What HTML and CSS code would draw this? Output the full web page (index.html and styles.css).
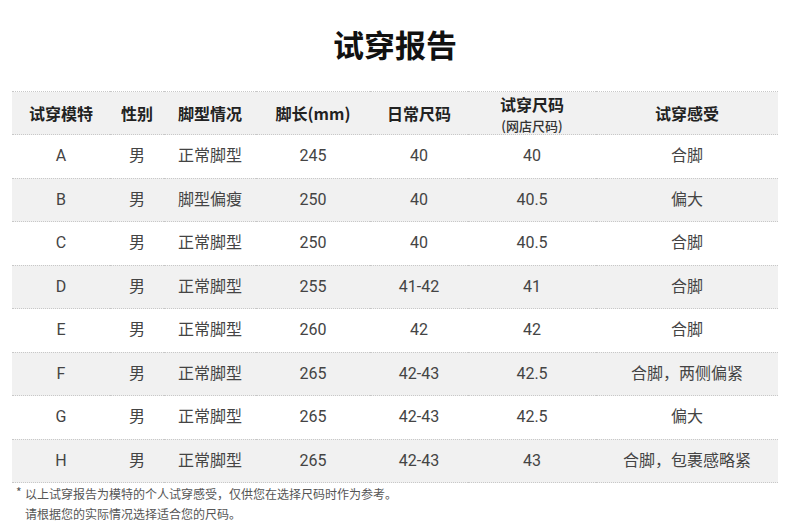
FILE: index.html
```html
<!DOCTYPE html>
<html lang="zh-CN">
<head>
<meta charset="utf-8">
<title>试穿报告</title>
<link rel="stylesheet" href="styles.css">
</head>
<body>
<div class="page">
  <h1 class="title">试穿报告</h1>
  <table class="report">
    <colgroup>
      <col class="c1"><col class="c2"><col class="c3"><col class="c4"><col class="c5"><col class="c6"><col class="c7">
    </colgroup>
    <thead>
      <tr>
        <th>试穿模特</th>
        <th>性别</th>
        <th>脚型情况</th>
        <th>脚长(mm)</th>
        <th>日常尺码</th>
        <th class="two"><span class="main">试穿尺码</span><span class="sub">(网店尺码)</span></th>
        <th>试穿感受</th>
      </tr>
    </thead>
    <tbody>
      <tr><td>A</td><td>男</td><td>正常脚型</td><td>245</td><td>40</td><td>40</td><td>合脚</td></tr>
      <tr class="alt"><td>B</td><td>男</td><td>脚型偏瘦</td><td>250</td><td>40</td><td>40.5</td><td>偏大</td></tr>
      <tr><td>C</td><td>男</td><td>正常脚型</td><td>250</td><td>40</td><td>40.5</td><td>合脚</td></tr>
      <tr class="alt"><td>D</td><td>男</td><td>正常脚型</td><td>255</td><td>41-42</td><td>41</td><td>合脚</td></tr>
      <tr><td>E</td><td>男</td><td>正常脚型</td><td>260</td><td>42</td><td>42</td><td>合脚</td></tr>
      <tr class="alt"><td>F</td><td>男</td><td>正常脚型</td><td>265</td><td>42-43</td><td>42.5</td><td>合脚，两侧偏紧</td></tr>
      <tr><td>G</td><td>男</td><td>正常脚型</td><td>265</td><td>42-43</td><td>42.5</td><td>偏大</td></tr>
      <tr class="alt"><td>H</td><td>男</td><td>正常脚型</td><td>265</td><td>42-43</td><td>43</td><td>合脚，包裹感略紧</td></tr>
    </tbody>
  </table>
  <div class="note">
    <p><span class="star">*</span>以上试穿报告为模特的个人试穿感受，仅供您在选择尺码时作为参考。</p>
    <p>请根据您的实际情况选择适合您的尺码。</p>
  </div>
</div>
</body>
</html>
```

FILE: styles.css
```css
html, body {
  margin: 0;
  padding: 0;
  background: #ffffff;
}
body {
  font-family: Roboto, "Noto Sans CJK SC", sans-serif;
  color: #444;
}
.page {
  width: 790px;
  padding: 0 12px;
  box-sizing: border-box;
}
.title {
  margin: 0;
  padding-top: 24px;
  height: 91px;
  box-sizing: border-box;
  text-align: center;
  font-family: "Noto Sans CJK SC", sans-serif;
  font-weight: 700;
  font-size: 31px;
  line-height: 40px;
  color: #111;
}
.report {
  width: 766px;
  border-collapse: collapse;
  table-layout: fixed;
}
.c1 { width: 98px; }
.c2 { width: 54px; }
.c3 { width: 92px; }
.c4 { width: 114px; }
.c5 { width: 98px; }
.c6 { width: 128px; }
.c7 { width: 182px; }
.report th,
.report td {
  padding: 0;
  text-align: center;
  border-bottom: 1px dotted #c8c8c8;
}
.report thead tr {
  background: #f1f1f1;
  border-top: 1px dotted #c8c8c8;
}
.report th {
  height: 42px;
  font-family: "Noto Sans CJK SC", sans-serif;
  font-weight: 700;
  font-size: 16px;
  color: #222;
  line-height: 20px;
}
.report th.two {
  vertical-align: top;
  padding-top: 3px;
  box-sizing: border-box;
}
.report th .main {
  display: block;
  line-height: 18px;
}
.report th .sub {
  display: block;
  margin-top: 5px;
  font-size: 13px;
  line-height: 16px;
  color: #333;
  font-weight: 500;
}
.report td {
  height: 42.5px;
  font-size: 16px;
  color: #444;
  line-height: 20px;
}
.report tr.alt {
  background: #f1f1f1;
}
.note {
  padding-top: 1px;
  font-family: "Noto Sans CJK SC", sans-serif;
  font-size: 12px;
  color: #555;
  line-height: 20px;
}
.note p {
  margin: 0;
  padding-left: 13px;
  position: relative;
}
.note .star {
  position: absolute;
  left: 4px;
  top: -2px;
  font-size: 12px;
}
```
